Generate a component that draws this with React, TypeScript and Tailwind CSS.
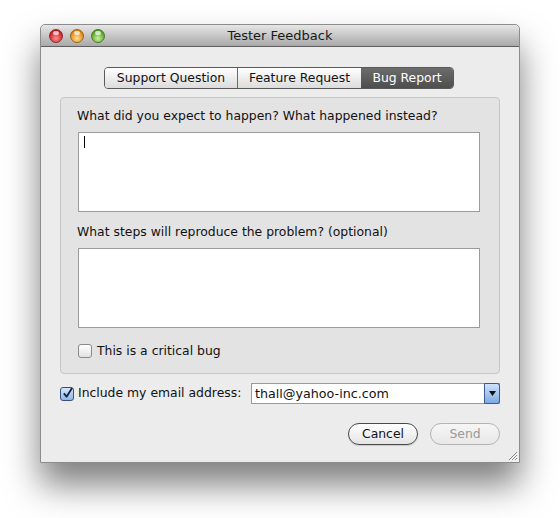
import React from "react";

const font = { fontFamily: '"DejaVu Sans", "Liberation Sans", sans-serif' };

function Light({ from, to, border }: { from: string; to: string; border: string }) {
  return (
    <div
      className="w-[14px] h-[14px] rounded-full relative"
      style={{ background: `radial-gradient(circle at 50% 70%, ${from} 0%, ${to} 75%)`, border: `1px solid ${border}` }}
    >
      <div className="absolute left-[3px] top-[1px] w-[6px] h-[4px] rounded-full bg-white/70" />
    </div>
  );
}

function Checkbox({ checked }: { checked?: boolean }) {
  return (
    <div
      className={
        "w-[14px] h-[14px] rounded-[3px] border flex items-center justify-center shrink-0 " +
        (checked
          ? "border-[#3a4f7a] bg-gradient-to-b from-[#d6e6fa] to-[#8fb6e8]"
          : "border-[#8a8a8a] bg-gradient-to-b from-[#ffffff] to-[#e2e2e2]")
      }
    >
      {checked && (
        <svg width="12" height="12" viewBox="0 0 12 12" className="-mt-[2px] ml-[1px]">
          <path d="M2 6.5 L5 10 L11 0.5" fill="none" stroke="#15243f" strokeWidth="2" strokeLinejoin="round" />
        </svg>
      )}
    </div>
  );
}

export default function App() {
  return (
    <div className="w-[560px] h-[518px] bg-white pt-[24px] pl-[40px]" style={font}>
      <div className="w-[480px] h-[439px] flex flex-col bg-[#ececec] border border-[#8c8c8c] shadow-[0_22px_34px_rgba(0,0,0,0.5)] rounded-t-[5px] relative">
        {/* Title bar */}
        <div className="h-[22px] shrink-0 rounded-t-[5px] bg-gradient-to-b from-[#e6e6e6] to-[#a9a9a9] border-b border-[#5e5e5e] flex items-center relative">
          <div className="flex gap-[7px] pl-[8px]">
            <Light from="#ff8f8f" to="#c8101a" border="#8b2a2a" />
            <Light from="#ffe28a" to="#e07a0b" border="#9b6120" />
            <Light from="#c8f59a" to="#4c9a1e" border="#4d7a2c" />
          </div>
          <div className="absolute inset-0 flex items-center justify-center text-[13px] text-[#1a1a1a] pt-[1px]">
            Tester Feedback
          </div>
        </div>

        {/* Body */}
        <div className="flex flex-col px-[19px] pt-[20px]">
          {/* Segmented control */}
          <div className="flex self-start ml-[44px] h-[22px] rounded-[4px] border border-[#5a5a5a] overflow-hidden text-[12.4px]">
            <div className="w-[133px] flex items-center justify-center bg-gradient-to-b from-[#ffffff] to-[#dcdcdc] text-[#111] border-r border-[#6a6a6a]">
              Support Question
            </div>
            <div className="w-[123px] flex items-center justify-center bg-gradient-to-b from-[#ffffff] to-[#dcdcdc] text-[#111]">
              Feature Request
            </div>
            <div className="w-[92px] flex items-center justify-center bg-gradient-to-b from-[#6c6c6c] to-[#4e4e4e] text-white">
              Bug Report
            </div>
          </div>

          {/* Group box */}
          <div className="mt-[8px] h-[277px] rounded-[4px] border border-[#c6c6c6] bg-[#e3e3e3] pl-[16px] pr-[19px] pt-[10px] flex flex-col text-[12.4px] text-[#111]">
            <div className="h-[16px] leading-[16px]">What did you expect to happen? What happened instead?</div>
            <div className="mt-[8px] h-[80px] bg-white border border-[#9c9c9c] ml-[1px] relative">
              <div className="absolute left-[5px] top-[3px] w-[1px] h-[12px] bg-black" />
            </div>
            <div className="mt-[12px] h-[16px] leading-[16px]">What steps will reproduce the problem? (optional)</div>
            <div className="mt-[8px] h-[80px] bg-white border border-[#9c9c9c] ml-[1px]" />
            <div className="mt-[14px] flex items-center gap-[5px] ml-[1px]">
              <Checkbox />
              <span>This is a critical bug</span>
            </div>
          </div>

          {/* Email row */}
          <div className="mt-[9px] flex items-center h-[21px] text-[12.4px] text-[#111]">
            <Checkbox checked />
            <span className="ml-[4px]">Include my email address:</span>
            <div className="ml-auto w-[249px] h-[21px] flex border border-[#9a9a9a] bg-white">
              <div className="flex-1 flex items-center pl-[3px] text-[12.7px]">thall@yahoo-inc.com</div>
              <div className="w-[16px] -my-[1px] -mr-[1px] rounded-r-[3px] border border-[#3f5a8e] bg-gradient-to-b from-[#cfe2fb] to-[#7ea9e3] flex items-center justify-center">
                <svg width="7" height="5" viewBox="0 0 7 5">
                  <path d="M0 0 H7 L3.5 5 Z" fill="#111" />
                </svg>
              </div>
            </div>
          </div>

          {/* Buttons */}
          <div className="mt-[19px] flex justify-end gap-[12px] text-[12.4px]">
            <div className="w-[70px] h-[22px] rounded-full border border-[#4a4a4a] bg-gradient-to-b from-[#ffffff] to-[#e4e4e4] flex items-center justify-center text-[#111] shadow-[0_1px_1px_rgba(0,0,0,0.15)]">
              Cancel
            </div>
            <div className="w-[70px] h-[22px] rounded-full border border-[#b4b4b4] bg-gradient-to-b from-[#f6f6f6] to-[#e8e8e8] flex items-center justify-center text-[#9a9a9a]">
              Send
            </div>
          </div>
        </div>

        {/* Resize grip */}
        <svg className="absolute right-[1px] bottom-[1px]" width="11" height="11" viewBox="0 0 11 11">
          <path d="M10 2 L2 10 M10 5 L5 10 M10 8 L8 10" stroke="#8a8a8a" strokeWidth="1" />
          <path d="M11 3 L3 11 M11 6 L6 11 M11 9 L9 11" stroke="#ffffff" strokeWidth="1" />
        </svg>
      </div>
    </div>
  );
}
